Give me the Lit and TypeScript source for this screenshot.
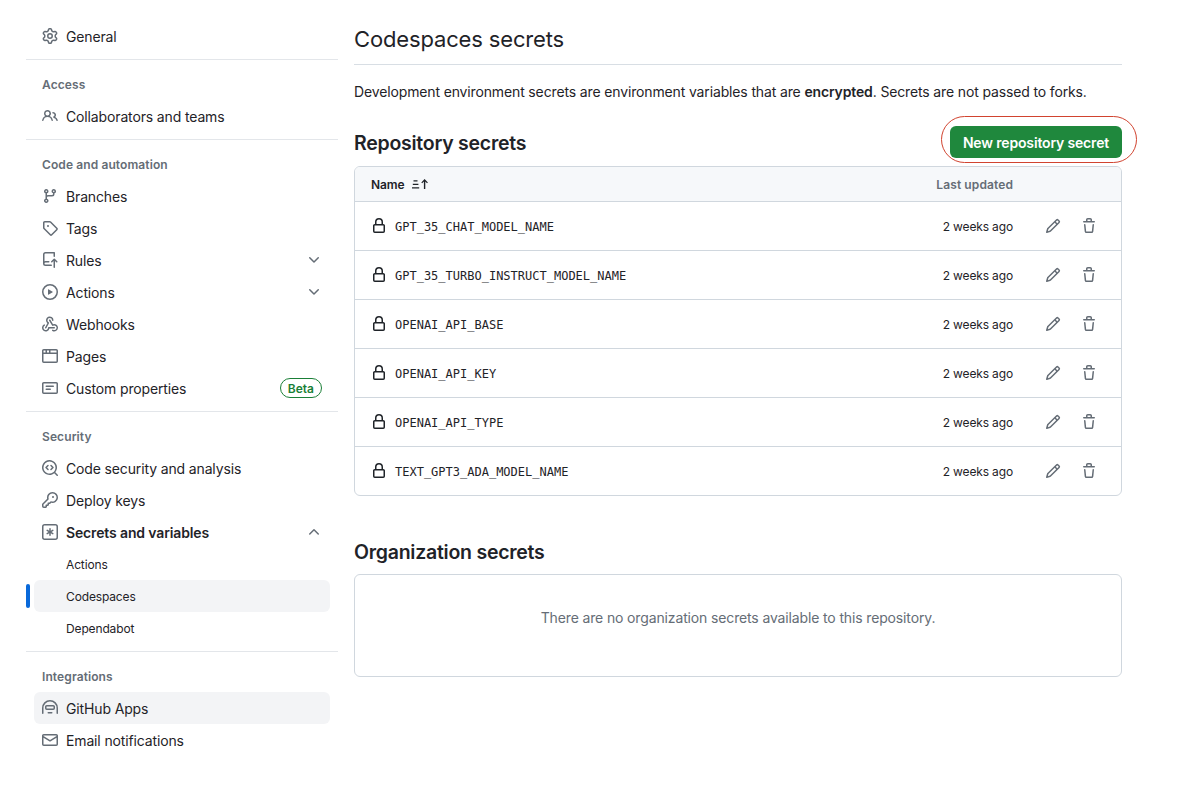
import { LitElement, html, css, svg } from 'lit';
import { customElement } from 'lit/decorators.js';
import { classMap } from 'lit/directives/class-map.js';

// octicons, 16px
const icons: Record<string, string[]> = {
  gear: ['M8 0a8.2 8.2 0 0 1 .701.031C9.444.095 9.99.645 10.16 1.29l.288 1.107c.018.066.079.158.212.224.231.114.454.243.668.386.123.082.233.09.299.071l1.103-.303c.644-.176 1.392.021 1.82.63.27.385.506.792.704 1.218.315.675.111 1.422-.364 1.891l-.814.806c-.049.048-.098.147-.088.294.016.257.016.515 0 .772-.01.147.038.246.088.294l.814.806c.475.469.679 1.216.364 1.891a7.977 7.977 0 0 1-.704 1.217c-.428.61-1.176.807-1.82.63l-1.102-.302c-.067-.019-.177-.011-.3.071a5.909 5.909 0 0 1-.668.386c-.133.066-.194.158-.211.224l-.29 1.106c-.168.646-.715 1.196-1.458 1.26a8.006 8.006 0 0 1-1.402 0c-.743-.064-1.289-.614-1.458-1.26l-.289-1.106c-.018-.066-.079-.158-.212-.224a5.738 5.738 0 0 1-.668-.386c-.123-.082-.233-.09-.299-.071l-1.103.303c-.644.176-1.392-.021-1.82-.63a8.12 8.12 0 0 1-.704-1.218c-.315-.675-.111-1.422.363-1.891l.815-.806c.05-.048.098-.147.088-.294a6.214 6.214 0 0 1 0-.772c.01-.147-.038-.246-.088-.294l-.815-.806C.635 6.045.431 5.298.746 4.623a7.92 7.92 0 0 1 .704-1.217c.428-.61 1.176-.807 1.82-.63l1.102.302c.067.019.177.011.3-.071.214-.143.437-.272.668-.386.133-.066.194-.158.211-.224l.29-1.106C6.009.645 6.556.095 7.299.03 7.53.01 7.764 0 8 0Zm-.571 1.525c-.036.003-.108.036-.137.146l-.289 1.105c-.147.561-.549.967-.998 1.189-.173.086-.34.183-.5.29-.417.278-.97.423-1.529.27l-1.103-.303c-.109-.03-.175.016-.195.045-.22.312-.412.644-.573.99-.014.031-.021.11.059.19l.815.806c.411.406.562.957.53 1.456a4.709 4.709 0 0 0 0 .582c.032.499-.119 1.05-.53 1.456l-.815.806c-.081.08-.073.159-.059.19.162.346.353.677.573.989.02.03.085.076.195.046l1.102-.303c.56-.153 1.113-.008 1.53.27.161.107.328.204.501.29.447.222.85.629.997 1.189l.289 1.105c.029.109.101.143.137.146a6.6 6.6 0 0 0 1.142 0c.036-.003.108-.036.137-.146l.289-1.105c.147-.561.549-.967.998-1.189.173-.086.34-.183.5-.29.417-.278.97-.423 1.529-.27l1.103.303c.109.029.175-.016.195-.045.22-.313.411-.644.573-.99.014-.031.021-.11-.059-.19l-.815-.806c-.411-.406-.562-.957-.53-1.456a4.709 4.709 0 0 0 0-.582c-.032-.499.119-1.05.53-1.456l.815-.806c.081-.08.073-.159.059-.19a6.464 6.464 0 0 0-.573-.989c-.02-.03-.085-.076-.195-.046l-1.102.303c-.56.153-1.113.008-1.53-.27a4.44 4.44 0 0 0-.501-.29c-.447-.222-.85-.629-.997-1.189l-.289-1.105c-.029-.11-.101-.143-.137-.146a6.6 6.6 0 0 0-1.142 0ZM11 8a3 3 0 1 1-6 0 3 3 0 0 1 6 0ZM9.5 8a1.5 1.5 0 1 0-3.001.001A1.5 1.5 0 0 0 9.5 8Z'],
  people: ['M2 5.5a3.5 3.5 0 1 1 5.898 2.549 5.508 5.508 0 0 1 3.034 4.084.75.75 0 1 1-1.482.235 4 4 0 0 0-7.9 0 .75.75 0 0 1-1.482-.236A5.507 5.507 0 0 1 3.102 8.05 3.493 3.493 0 0 1 2 5.5ZM11 4a3.001 3.001 0 0 1 2.22 5.018 5.01 5.01 0 0 1 2.56 3.012.749.749 0 0 1-.885.954.752.752 0 0 1-.549-.514 3.507 3.507 0 0 0-2.522-2.372.75.75 0 0 1-.574-.73v-.352a.75.75 0 0 1 .416-.672A1.5 1.5 0 0 0 11 5.5.75.75 0 0 1 11 4Zm-5.5-.5a2 2 0 1 0-.001 3.999A2 2 0 0 0 5.5 3.5Z'],
  branch: ['M9.5 3.25a2.25 2.25 0 1 1 3 2.122V6A2.5 2.5 0 0 1 10 8.5H6a1 1 0 0 0-1 1v1.128a2.251 2.251 0 1 1-1.5 0V5.372a2.25 2.25 0 1 1 1.5 0v1.836A2.493 2.493 0 0 1 6 7h4a1 1 0 0 0 1-1v-.628A2.25 2.25 0 0 1 9.5 3.25Zm-6 0a.75.75 0 1 0 1.5 0 .75.75 0 0 0-1.5 0Zm8.25-.75a.75.75 0 1 0 0 1.5.75.75 0 0 0 0-1.5ZM4.25 12a.75.75 0 1 0 0 1.5.75.75 0 0 0 0-1.5Z'],
  tag: ['M1 7.775V2.75C1 1.784 1.784 1 2.75 1h5.025c.464 0 .91.184 1.238.513l6.25 6.25a1.75 1.75 0 0 1 0 2.474l-5.026 5.026a1.75 1.75 0 0 1-2.474 0l-6.25-6.25A1.752 1.752 0 0 1 1 7.775Zm1.5 0c0 .066.026.13.073.177l6.25 6.25a.25.25 0 0 0 .354 0l5.025-5.025a.25.25 0 0 0 0-.354l-6.25-6.25a.25.25 0 0 0-.177-.073H2.75a.25.25 0 0 0-.25.25ZM6 5a1 1 0 1 1 0 2 1 1 0 0 1 0-2Z'],
  push: ['M1 2.5A2.5 2.5 0 0 1 3.5 0h8.75a.75.75 0 0 1 .75.75v3.5a.75.75 0 0 1-1.5 0V1.5h-8a1 1 0 0 0-1 1v6.708A2.493 2.493 0 0 1 3.5 9h3.25a.75.75 0 0 1 0 1.5H3.5a1 1 0 0 0 0 2h5.75a.75.75 0 0 1 0 1.5H3.5A2.5 2.5 0 0 1 1 11.5Zm13.23 7.79h-.001l-1.224-1.224v6.184a.75.75 0 0 1-1.5 0V9.066L10.28 10.29a.75.75 0 0 1-1.06-1.061l2.505-2.504a.75.75 0 0 1 1.06 0L15.29 9.23a.751.751 0 0 1-.018 1.042.751.751 0 0 1-1.042.018Z'],
  play: ['M8 0a8 8 0 1 1 0 16A8 8 0 0 1 8 0ZM1.5 8a6.5 6.5 0 1 0 13 0 6.5 6.5 0 0 0-13 0Zm4.879-2.773 4.264 2.559a.25.25 0 0 1 0 .428l-4.264 2.559A.25.25 0 0 1 6 10.559V5.442a.25.25 0 0 1 .379-.215Z'],
  webhook: [
    'M5.5 4.25a2.25 2.25 0 0 1 4.5 0 .75.75 0 0 0 1.5 0 3.75 3.75 0 1 0-6.14 2.889l-2.272 4.258a.75.75 0 0 0 1.324.706L7 7.25a.75.75 0 0 0-.309-1.015A2.25 2.25 0 0 1 5.5 4.25Z',
    'M7.364 3.607a.75.75 0 0 1 1.03.257l2.608 4.349a3.75 3.75 0 1 1-.628 6.785.75.75 0 0 1 .752-1.299 2.25 2.25 0 1 0-.033-3.88.75.75 0 0 1-1.03-.256L7.107 4.636a.75.75 0 0 1 .257-1.03Z',
    'M2.9 8.776A.75.75 0 0 1 2.625 9.8 2.25 2.25 0 1 0 6 11.75a.75.75 0 0 1 .75-.751h5.5a.75.75 0 0 1 0 1.5H7.425a3.751 3.751 0 1 1-5.55-3.998.75.75 0 0 1 1.024.274Z',
  ],
  browser: ['M0 2.75C0 1.784.784 1 1.75 1h12.5c.966 0 1.75.784 1.75 1.75v10.5A1.75 1.75 0 0 1 14.25 15H1.75A1.75 1.75 0 0 1 0 13.25ZM14.5 6h-13v7.25c0 .138.112.25.25.25h12.5a.25.25 0 0 0 .25-.25Zm-6-3.5v2H14.5V2.75a.25.25 0 0 0-.25-.25ZM5 2.5v2h2v-2Zm-3.25 0a.25.25 0 0 0-.25.25V4.5h2v-2Z'],
  note: ['M0 3.75C0 2.784.784 2 1.75 2h12.5c.966 0 1.75.784 1.75 1.75v8.5A1.75 1.75 0 0 1 14.25 14H1.75A1.75 1.75 0 0 1 0 12.25Zm1.75-.25a.25.25 0 0 0-.25.25v8.5c0 .138.112.25.25.25h12.5a.25.25 0 0 0 .25-.25v-8.5a.25.25 0 0 0-.25-.25ZM3.5 6.25a.75.75 0 0 1 .75-.75h7a.75.75 0 0 1 0 1.5h-7a.75.75 0 0 1-.75-.75Zm.75 2.25h4a.75.75 0 0 1 0 1.5h-4a.75.75 0 0 1 0-1.5Z'],
  codescan: [
    'M8.47 4.97a.75.75 0 0 0 0 1.06L9.94 7.5 8.47 8.97a.75.75 0 1 0 1.06 1.06l2-2a.75.75 0 0 0 0-1.06l-2-2a.75.75 0 0 0-1.06 0ZM6.53 6.03a.75.75 0 0 0-1.06-1.06l-2 2a.75.75 0 0 0 0 1.06l2 2a.75.75 0 1 0 1.06-1.06L5.06 7.5l1.47-1.47Z',
    'M12.246 13.307a7.501 7.501 0 1 1 1.06-1.06l2.474 2.473a.749.749 0 0 1-.326 1.275.749.749 0 0 1-.734-.215ZM1.5 7.5a6.002 6.002 0 0 0 3.502 5.455A5.998 5.998 0 0 0 13.5 7.5a6 6 0 0 0-12 0Z',
  ],
  key: ['M10.5 0a5.499 5.499 0 1 1-1.288 10.848l-.932.932a.749.749 0 0 1-.53.22H7v.75a.749.749 0 0 1-.22.53l-.5.5a.749.749 0 0 1-.53.22H5v.75a.749.749 0 0 1-.22.53l-.5.5a.749.749 0 0 1-.53.22h-2A1.75 1.75 0 0 1 0 14.25v-2c0-.199.079-.389.22-.53l4.932-4.932A5.5 5.5 0 0 1 10.5 0Zm-4 5.5c-.001.431.069.86.205 1.269a.75.75 0 0 1-.181.768L1.5 12.56v1.69c0 .138.112.25.25.25h1.69l.06-.06v-1.19a.75.75 0 0 1 .75-.75h1.19l.06-.06v-1.19a.75.75 0 0 1 .75-.75h1.19l1.023-1.025a.75.75 0 0 1 .768-.18A4 4 0 1 0 6.5 5.5ZM11 6a1 1 0 1 1 0-2 1 1 0 0 1 0 2Z'],
  asterisk: [
    'M0 2.75A2.75 2.75 0 0 1 2.75 0h10.5A2.75 2.75 0 0 1 16 2.75v10.5A2.75 2.75 0 0 1 13.25 16H2.75A2.75 2.75 0 0 1 0 13.25ZM2.75 1.5c-.69 0-1.25.56-1.25 1.25v10.5c0 .69.56 1.25 1.25 1.25h10.5c.69 0 1.25-.56 1.25-1.25V2.75c0-.69-.56-1.25-1.25-1.25Z',
    'M8 4a.75.75 0 0 1 .75.75V6.7l1.69-.975a.75.75 0 0 1 .75 1.3L9.5 8l1.69.976a.75.75 0 0 1-.75 1.298L8.75 9.3v1.951a.75.75 0 0 1-1.5 0V9.299l-1.69.976a.75.75 0 0 1-.75-1.3L6.5 8l-1.69-.975a.75.75 0 0 1 .75-1.3l1.69.976V4.75A.75.75 0 0 1 8 4Z',
  ],
  hubot: ['M0 8a8 8 0 0 1 16 0v5.25a.75.75 0 0 1-1.5 0V8a6.5 6.5 0 1 0-13 0v5.25a.75.75 0 0 1-1.5 0Zm3-1.25C3 5.784 3.784 5 4.75 5h6.5c.966 0 1.75.784 1.75 1.75v1.5A1.75 1.75 0 0 1 11.25 10h-6.5A1.75 1.75 0 0 1 3 8.25Zm1.75-.25a.25.25 0 0 0-.25.25v1.5c0 .138.112.25.25.25h6.5a.25.25 0 0 0 .25-.25v-1.5a.25.25 0 0 0-.25-.25ZM6.25 12h3.5a.75.75 0 0 1 0 1.5h-3.5a.75.75 0 0 1 0-1.5Z'],
  mail: ['M1.75 2h12.5c.966 0 1.75.784 1.75 1.75v8.5A1.75 1.75 0 0 1 14.25 14H1.75A1.75 1.75 0 0 1 0 12.25v-8.5C0 2.784.784 2 1.75 2ZM1.5 12.251c0 .138.112.25.25.25h12.5a.25.25 0 0 0 .25-.25V5.809L8.38 9.397a.75.75 0 0 1-.76 0L1.5 5.809v6.442Zm13-8.181v-.32a.25.25 0 0 0-.25-.25H1.75a.25.25 0 0 0-.25.25v.32L8 7.88Z'],
  lock: ['M4 4a4 4 0 0 1 8 0v2h.25c.966 0 1.75.784 1.75 1.75v5.5A1.75 1.75 0 0 1 12.25 15h-8.5A1.75 1.75 0 0 1 2 13.25v-5.5C2 6.784 2.784 6 3.75 6H4Zm8.25 3.5h-8.5a.25.25 0 0 0-.25.25v5.5c0 .138.112.25.25.25h8.5a.25.25 0 0 0 .25-.25v-5.5a.25.25 0 0 0-.25-.25ZM10.5 6V4a2.5 2.5 0 1 0-5 0v2Z'],
  pencil: ['M11.013 1.427a1.75 1.75 0 0 1 2.474 0l1.086 1.086a1.75 1.75 0 0 1 0 2.474l-8.61 8.61c-.21.21-.47.364-.756.445l-3.251.93a.75.75 0 0 1-.927-.928l.929-3.25c.081-.286.235-.547.445-.758l8.61-8.61Zm.176 4.823L9.75 4.81l-6.286 6.287a.253.253 0 0 0-.064.108l-.558 1.953 1.953-.558a.253.253 0 0 0 .108-.064Zm1.238-3.763a.25.25 0 0 0-.354 0L10.811 3.75l1.439 1.44 1.263-1.263a.25.25 0 0 0 0-.354Z'],
  trash: ['M11 1.75V3h2.25a.75.75 0 0 1 0 1.5H2.75a.75.75 0 0 1 0-1.5H5V1.75C5 .784 5.784 0 6.75 0h2.5C10.216 0 11 .784 11 1.75ZM4.496 6.675l.66 6.6a.25.25 0 0 0 .249.225h5.19a.25.25 0 0 0 .249-.225l.66-6.6a.75.75 0 0 1 1.492.149l-.66 6.6A1.748 1.748 0 0 1 10.595 15h-5.19a1.75 1.75 0 0 1-1.741-1.575l-.66-6.6a.75.75 0 1 1 1.492-.15ZM6.5 1.75V3h3V1.75a.25.25 0 0 0-.25-.25h-2.5a.25.25 0 0 0-.25.25Z'],
  down: ['M12.78 5.22a.749.749 0 0 1 0 1.06l-4.25 4.25a.749.749 0 0 1-1.06 0L3.22 6.28a.749.749 0 1 1 1.06-1.06L8 8.939l3.72-3.719a.749.749 0 0 1 1.06 0Z'],
  up: ['M3.22 10.53a.749.749 0 0 1 0-1.06l4.25-4.25a.749.749 0 0 1 1.06 0l4.25 4.25a.749.749 0 1 1-1.06 1.06L8 6.811 4.28 10.53a.749.749 0 0 1-1.06 0Z'],
  sort: ['M1.5 4.2h4v1.3h-4ZM.8 7.7h5.6V9H.8ZM0 11.2h7.2v1.3H0ZM12.6 3l3.3 3.4-.9.9-1.7-1.8V13h-1.4V5.5L10.2 7.3l-.9-.9Z'],
};

const icon = (name: string) => html`<svg class="icon" viewBox="0 0 16 16" width="16" height="16" fill="currentColor">
  ${icons[name].map((d) => svg`<path d=${d}></path>`)}
</svg>`;

type NavItem = { label: string; icon?: string; chevron?: string; beta?: boolean; bold?: boolean; sub?: boolean; active?: boolean; hover?: boolean };
type NavGroup = { title?: string; items: NavItem[] };

const nav: NavGroup[] = [
  { items: [{ label: 'General', icon: 'gear' }] },
  { title: 'Access', items: [{ label: 'Collaborators and teams', icon: 'people' }] },
  {
    title: 'Code and automation',
    items: [
      { label: 'Branches', icon: 'branch' },
      { label: 'Tags', icon: 'tag' },
      { label: 'Rules', icon: 'push', chevron: 'down' },
      { label: 'Actions', icon: 'play', chevron: 'down' },
      { label: 'Webhooks', icon: 'webhook' },
      { label: 'Pages', icon: 'browser' },
      { label: 'Custom properties', icon: 'note', beta: true },
    ],
  },
  {
    title: 'Security',
    items: [
      { label: 'Code security and analysis', icon: 'codescan' },
      { label: 'Deploy keys', icon: 'key' },
      { label: 'Secrets and variables', icon: 'asterisk', chevron: 'up', bold: true },
      { label: 'Actions', sub: true },
      { label: 'Codespaces', sub: true, active: true },
      { label: 'Dependabot', sub: true },
    ],
  },
  {
    title: 'Integrations',
    items: [
      { label: 'GitHub Apps', icon: 'hubot', hover: true },
      { label: 'Email notifications', icon: 'mail' },
    ],
  },
];

const secrets = [
  'GPT_35_CHAT_MODEL_NAME',
  'GPT_35_TURBO_INSTRUCT_MODEL_NAME',
  'OPENAI_API_BASE',
  'OPENAI_API_KEY',
  'OPENAI_API_TYPE',
  'TEXT_GPT3_ADA_MODEL_NAME',
];

@customElement('app-root')
export class AppRoot extends LitElement {
  static styles = css`
    :host {
      display: block;
      background: #fff;
      color: #1f2328;
      font-family: Inter, "Liberation Sans", sans-serif;
      font-size: 14px;
      letter-spacing: -0.14px;
    }
    .page {
      display: flex;
      gap: 16px;
      padding: 20px 0 40px 26px;
    }
    .sidebar {
      width: 312px;
      flex: none;
    }
    .divider {
      height: 1px;
      background: #e3e6ea;
      margin: 7px 0 8px;
    }
    .heading {
      height: 32px;
      line-height: 34px;
      padding-left: 16px;
      font-size: 12px;
      font-weight: 600;
      letter-spacing: 0.1px;
      color: #656d76;
    }
    .item {
      position: relative;
      display: flex;
      align-items: center;
      height: 32px;
      margin: 0 8px;
      padding: 0 8px;
      border-radius: 6px;
    }
    .item .icon {
      flex: none;
      margin-right: 8px;
      color: #656d76;
    }
    .item .label {
      flex: 1;
    }
    .item.bold .label {
      font-weight: 600;
    }
    .item.sub {
      padding-left: 32px;
      font-size: 12px;
    }
    .item.shaded {
      background: #f3f4f6;
    }
    .item.active::before {
      content: '';
      position: absolute;
      left: -8px;
      top: 4px;
      bottom: 4px;
      width: 4px;
      border-radius: 6px;
      background: #0969da;
    }
    .item .chevron {
      display: flex;
    }
    .item .chevron .icon {
      margin-right: 0;
    }
    .beta {
      height: 18px;
      line-height: 19px;
      padding: 0 7px;
      border: 1px solid #1a7f37;
      border-radius: 10px;
      color: #1a7f37;
      font-size: 12px;
      font-weight: 600;
      letter-spacing: 0;
    }
    .main {
      width: 768px;
      flex: none;
    }
    h1 {
      margin: 0;
      padding: 1px 0 7px;
      border-bottom: 1px solid #d8dee4;
      font-size: 22px;
      font-weight: 400;
      letter-spacing: -0.15px;
      line-height: 36px;
    }
    .intro {
      margin: 16px 0 0;
      line-height: 21px;
    }
    .intro strong {
      font-weight: 600;
    }
    .section-head {
      display: flex;
      justify-content: space-between;
      align-items: center;
      margin-top: 24px;
      height: 32px;
    }
    h2 {
      margin: 0;
      font-size: 19.5px;
      font-weight: 600;
      letter-spacing: -0.25px;
      line-height: 30px;
    }
    .section-head h2 {
      padding-top: 2px;
    }
    .btn-wrap {
      position: relative;
    }
    .btn {
      display: block;
      width: 172px;
      height: 32px;
      padding: 0;
      border: none;
      border-radius: 6px;
      background: #1f883d;
      color: #fff;
      font: 600 14px Inter, "Liberation Sans", sans-serif;
      letter-spacing: -0.16px;
    }
    .circle {
      position: absolute;
      left: -9px;
      right: -15px;
      top: -10px;
      bottom: -5px;
      border: 1px solid #d1432f;
      border-radius: 24px;
    }
    .box {
      border: 1px solid #d0d7de;
      border-radius: 6px;
      overflow: hidden;
    }
    .table {
      margin-top: 8px;
    }
    .row {
      display: flex;
      align-items: center;
      height: 48px;
      padding: 0 24px 0 16px;
      border-top: 1px solid #d0d7de;
      font-size: 12px;
    }
    .row.head {
      height: 34px;
      border-top: none;
      background: #f6f8fa;
      font-weight: 600;
      letter-spacing: 0.1px;
      color: #656d76;
    }
    .row .name {
      flex: 1;
      display: flex;
      align-items: center;
      gap: 8px;
      font-family: "DejaVu Sans Mono", monospace;
      letter-spacing: 0;
    }
    .row .name span {
      padding-top: 2px;
    }
    .row .name .icon {
      color: #1f2328;
    }
    .row.head .name {
      font-family: inherit;
      color: #1f2328;
      letter-spacing: -0.14px;
    }
    .updated {
      margin-right: 84px;
    }
    .actions {
      display: flex;
      gap: 20px;
      margin-left: 32px;
      color: #656d76;
    }
    .row .updated.with-actions {
      margin-right: 0;
    }
    .org-title {
      margin-top: 41px;
    }
    .org {
      display: flex;
      justify-content: center;
      margin-top: 7px;
      height: 103px;
      padding-top: 32px;
      box-sizing: border-box;
      line-height: 21px;
      color: #656d76;
    }
  `;

  renderItem(item: NavItem) {
    const classes = {
      item: true,
      bold: !!item.bold,
      sub: !!item.sub,
      active: !!item.active,
      shaded: !!item.active || !!item.hover,
    };
    return html`<div class=${classMap(classes)}>
      ${item.icon ? icon(item.icon) : ''}
      <span class="label">${item.label}</span>
      ${item.chevron ? html`<span class="chevron">${icon(item.chevron)}</span>` : ''}
      ${item.beta ? html`<span class="beta">Beta</span>` : ''}
    </div>`;
  }

  render() {
    return html`
      <div class="page">
        <nav class="sidebar">
          ${nav.map((group, i) => html`
            ${i > 0 ? html`<div class="divider"></div>` : ''}
            ${group.title ? html`<div class="heading">${group.title}</div>` : ''}
            ${group.items.map((item) => this.renderItem(item))}
          `)}
        </nav>
        <main class="main">
          <h1>Codespaces secrets</h1>
          <p class="intro">Development environment secrets are environment variables that are <strong>encrypted</strong>. Secrets are not passed to forks.</p>
          <div class="section-head">
            <h2>Repository secrets</h2>
            <div class="btn-wrap">
              <button class="btn">New repository secret</button>
              <div class="circle"></div>
            </div>
          </div>
          <div class="box table">
            <div class="row head">
              <div class="name">Name ${icon('sort')}</div>
              <div class="updated">Last updated</div>
            </div>
            ${secrets.map((name) => html`
              <div class="row">
                <div class="name">${icon('lock')}<span>${name}</span></div>
                <div class="updated with-actions">2 weeks ago</div>
                <div class="actions">${icon('pencil')}${icon('trash')}</div>
              </div>
            `)}
          </div>
          <h2 class="org-title">Organization secrets</h2>
          <div class="box org">There are no organization secrets available to this repository.</div>
        </main>
      </div>
    `;
  }
}
